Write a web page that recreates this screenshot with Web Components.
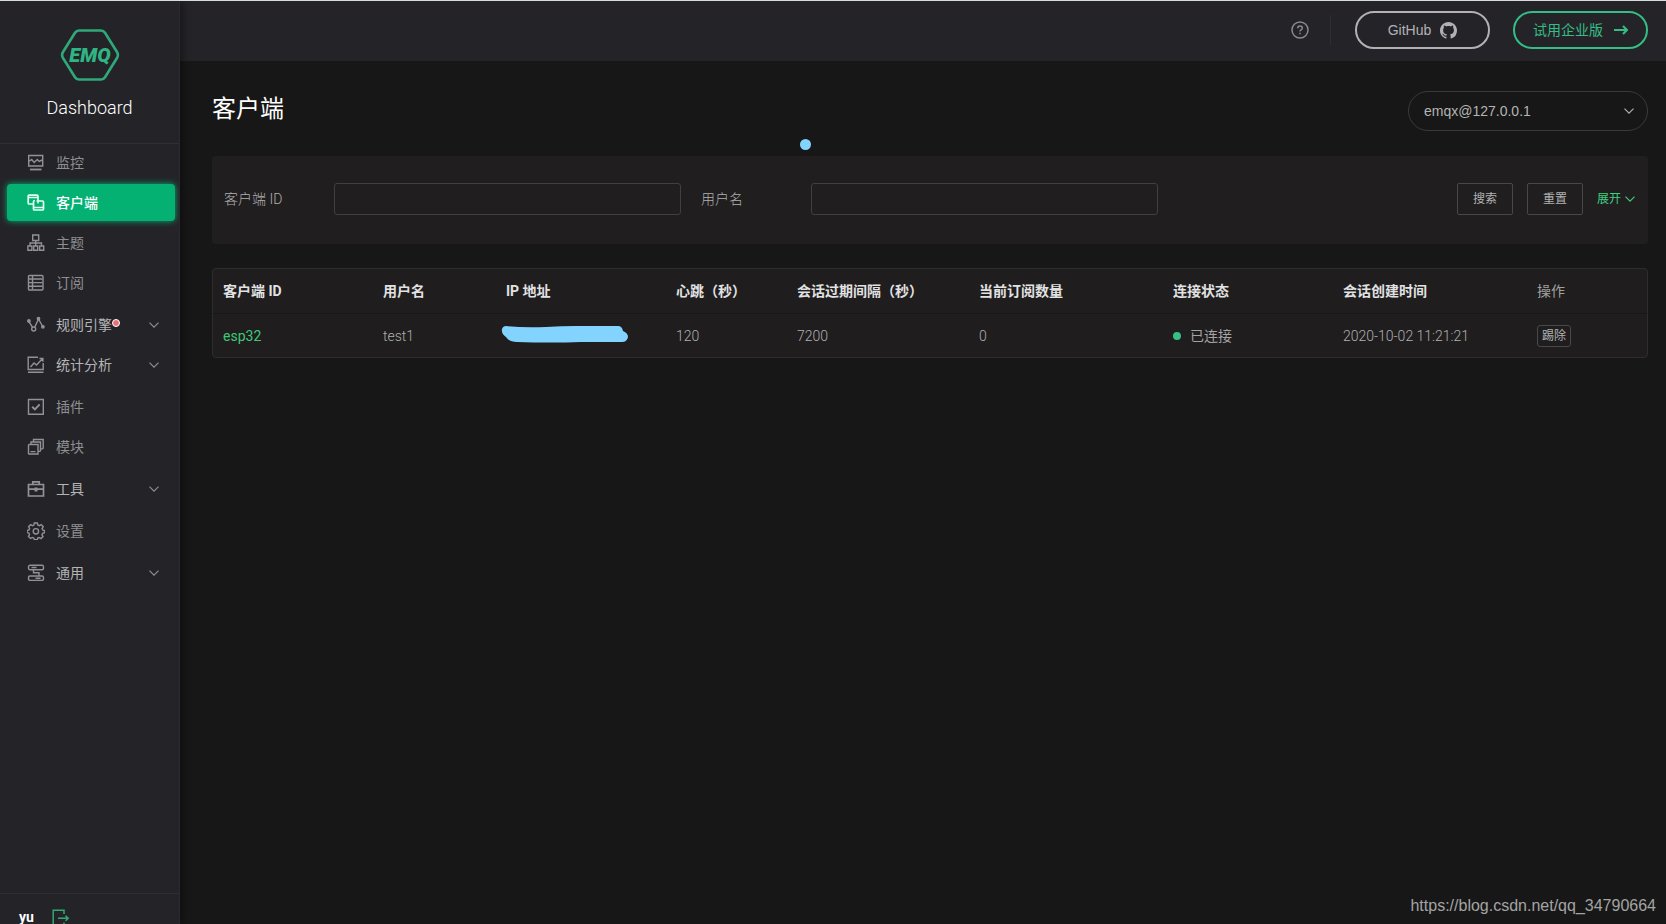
<!DOCTYPE html>
<html lang="zh-CN">
<head>
<meta charset="utf-8">
<meta name="viewport" content="width=device-width, initial-scale=1">
<title>EMQ Dashboard</title>
<style>
  body {
    margin: 0;
    background: #171717;
    color: #a3a3a3;
    font: 14px/20px Roboto, "Noto Sans CJK SC", sans-serif;
  }
</style>
</head>
<body>
<emq-app></emq-app>
<script>
function define(name, html, setup) {
  const template = document.createElement('template');
  template.innerHTML = html;
  customElements.define(name, class extends HTMLElement {
    connectedCallback() {
      if (this.shadowRoot) return;
      this.attachShadow({ mode: 'open' }).append(template.content.cloneNode(true));
      if (setup) setup(this, this.shadowRoot);
    }
  });
}

const ICONS = {
  monitor: '<path d="M1.700 1.500h14v10.500h-14zM1.700 7.500l3-2 2.500 3 3-3 2 2 3-1.500"/><path d="M3 15.500h11.500" stroke-width="1.800"/>',
  clients: '<path d="M7 10H2.200Q1.200 10 1.200 9V2.200Q1.200 1.200 2.200 1.200H10Q11 1.200 11 2.200V6M1.200 3.500H11" stroke-width="1.700"/><path d="M9.500 7H15.500Q16.500 7 16.500 8V15Q16.500 16 15.500 16H7.500Q6.500 16 6.500 15V7.500Q6.500 6.500 8 6.500M6.500 13.500h10" stroke-width="1.700"/><path d="M11 6V9.500"/>',
  topics: '<path d="M5.700 1h6v5.500h-6zM8.700 6.500V9M3 12V9h11.500v3M8.700 9v3M.900 12h4v4.200h-4zM6.700 12h4v4.200h-4zM12.700 12h4v4.200h-4z"/>',
  subs: '<rect x="1.500" y="1.500" width="14.500" height="14.500" rx="1"/><path d="M1.500 5h14M1.500 8.600h14M1.500 12.200h14M5.500 1.500v14"/>',
  rules: '<path d="M1.800 5.500L5.600 11.300M7.700 11.300L11.500 3L15.700 10.500"/><circle cx="1.900" cy="5" r="1.200" fill="currentColor"/><circle cx="6.700" cy="13" r="2"/><circle cx="11.500" cy="2.600" r="1.200" fill="currentColor"/><circle cx="15.900" cy="10.800" r="1.200" fill="currentColor"/>',
  stats: '<path d="M11 1.200H1.200V13.500H16.200V7M1 16.300h15.500M3.500 11l3.500-4 2.500 2L15.200 3M12.500 2.500h3.400v3.300"/>',
  plugins: '<path d="M1.500 1.500h14.800v14.800h-14.800z"/><path d="M5.200 8.700l2.700 2.700 4.800-5" stroke-width="2"/>',
  modules: '<path d="M2.200 6.500H11V16H2.200Q1.500 16 1.500 15V7.500Q1.500 6.500 2.200 6.500M4 6.500V4h9.500V12.500Q13.500 13.500 11 13.500M6.500 4V1.500H16.200V10Q16.200 11 13.500 11M3.500 13.600h5"/>',
  tools: '<path d="M1.500 4.500h15v11.500h-15zM5.800 4.500V1.800h6.400V4.500M1.500 9.200h15" stroke-width="1.700"/><path d="M9 7.500v4" stroke-width="3"/>',
  settings: '<path d="M7.300 1h3l.500 2 1.500.700 1.900-1.100 2 2.100-1.100 1.900.600 1.400 1.800.500v2.200l-1.900.600-.600 1.400 1 1.900-2 2-1.800-1.100-1.500.600-.500 1.700h-2.800l-.600-1.800-1.500-.600-1.800 1-2-2 1-1.800-.600-1.500-1.800-.500V8.500l1.900-.500.600-1.500-1-1.800 2-2.100 1.800 1.100 1.500-.600z"/><circle cx="8.900" cy="9.300" r="2.700"/>',
  general: '<rect x="1.500" y="1.300" width="15" height="4.400" rx="1.500"/><rect x="1.500" y="12" width="15" height="4.400" rx="1.500"/><path d="M6.500 5.700V8.800H12V12M4.500 3.500h5M8.500 14.200h5"/>'
};

/* Line icon picked by name */
define('emq-icon', `
  <style>
    :host { display: block; width: 18px; height: 18px; flex: none; }
    svg { display: block; width: 100%; height: 100%; fill: none; stroke: currentColor; stroke-width: 1.4; }
  </style>
  <svg viewBox="0 0 18 18" aria-hidden="true"></svg>`,
  (host, root) => { root.querySelector('svg').innerHTML = ICONS[host.getAttribute('name')] || ''; });

define('emq-chevron', `
  <style>
    :host { display: block; flex: none; width: 10px; height: 6px; }
    svg { display: block; fill: none; stroke: currentColor; stroke-width: 1.1; }
  </style>
  <svg width="10" height="6" viewBox="0 0 10 6" aria-hidden="true"><path d="M.5 .7L5 5.200L9.500 .7"/></svg>`);

define('emq-nav-item', `
  <style>
    :host { display: block; color: #8f8f92; }
    :host([group]) { color: #b4b4b6; }
    a {
      display: flex; align-items: center; height: 37px; margin: 0 4px 3px 7px; padding: 0 16px 0 20px;
      border-radius: 4px; color: inherit; text-decoration: none;
    }
    emq-icon { margin-right: 11px; color: #929294; }
    emq-chevron { display: none; margin-left: auto; color: #929294; }
    :host([group]) emq-chevron { display: block; }
    :host([active]) a { background: #04b173; color: #fff; font-weight: 500; box-shadow: 0 0 6px #04b173; }
    :host([active]) emq-icon { color: #e4fff4; }
    .label { position: relative; }
    .badge { display: none; }
    :host([badge]) .badge {
      display: block; position: absolute; top: 4px; right: -8px; width: 6px; height: 6px;
      border: 1px solid #fff; border-radius: 50%; background: #e8707a;
    }
  </style>
  <a href="#"><emq-icon></emq-icon><span class="label"><slot></slot><i class="badge"></i></span><emq-chevron></emq-chevron></a>`,
  (host, root) => {
    const icon = document.createElement('emq-icon');
    icon.setAttribute('name', host.getAttribute('icon'));
    root.querySelector('emq-icon').replaceWith(icon);
    if (host.hasAttribute('active')) root.querySelector('a').setAttribute('aria-current', 'page');
  });

define('emq-sidebar', `
  <style>
    :host {
      display: flex; flex-direction: column; box-sizing: border-box; height: 100%; overflow: hidden;
      background: #242428; border-right: 1px solid #2b2b2e;
    }
    .brand {
      display: flex; flex-direction: column; align-items: center; box-sizing: border-box; flex: none;
      height: 143px; padding-top: 27px; border-bottom: 1px solid #303034; color: #fff;
    }
    .brand svg { display: block; }
    .brand text { font: italic 900 20px Roboto, sans-serif; fill: #2fb583; }
    .brand span { margin-top: 14px; font-size: 18px; line-height: 24px; font-weight: 300; }
    nav { display: flex; flex-direction: column; gap: 2px; flex: 1; min-height: 0; }
    footer {
      display: flex; align-items: flex-start; gap: 18px; box-sizing: border-box; flex: none; height: 31px;
      padding: 15px 19px 0; border-top: 1px solid #2f2f32; color: #fff; font-weight: 700;
    }
    footer span { line-height: 16px; }
    footer a { color: #33a873; }
    footer svg { display: block; fill: none; stroke: currentColor; stroke-width: 1.5; }
  </style>
  <div class="brand">
    <svg width="60" height="54" viewBox="0 0 60 54" role="img" aria-label="EMQ">
      <path d="M19 2.500H41Q43.500 2.500 45 4.800L57 24Q58.800 27 57 30L45 49.200Q43.500 51.500 41 51.500H19Q16.500 51.500 15 49.200L3 30Q1.200 27 3 24L15 4.800Q16.500 2.500 19 2.500Z" fill="none" stroke="#2fa87a" stroke-width="2.600"/>
      <text x="30" y="34" text-anchor="middle">EMQ</text>
    </svg>
    <span>Dashboard</span>
  </div>
  <nav>
    <div>
      <emq-nav-item icon="monitor">监控</emq-nav-item>
      <emq-nav-item icon="clients" active>客户端</emq-nav-item>
      <emq-nav-item icon="topics">主题</emq-nav-item>
      <emq-nav-item icon="subs">订阅</emq-nav-item>
    </div>
    <div>
      <emq-nav-item icon="rules" group badge>规则引擎</emq-nav-item>
      <emq-nav-item icon="stats" group>统计分析</emq-nav-item>
    </div>
    <div>
      <emq-nav-item icon="plugins">插件</emq-nav-item>
      <emq-nav-item icon="modules">模块</emq-nav-item>
    </div>
    <emq-nav-item icon="tools" group>工具</emq-nav-item>
    <emq-nav-item icon="settings">设置</emq-nav-item>
    <emq-nav-item icon="general" group>通用</emq-nav-item>
  </nav>
  <footer>
    <span>yu</span>
    <a href="#" aria-label="退出"><svg width="18" height="19" viewBox="0 0 18 19"><path d="M12 5V1.200H1.200V17.500H12V13.500M6 9.300H16M13.500 6.800L16.200 9.300L13.500 11.800"/></svg></a>
  </footer>`);

define('emq-topbar', `
  <style>
    :host {
      display: flex; align-items: center; justify-content: flex-end; box-sizing: border-box; height: 60px;
      padding: 0 18px 2px; background: #242428; font-family: "Liberation Sans", "Noto Sans CJK SC", sans-serif;
    }
    .help { display: block; color: #8a8a8d; }
    .help svg { display: block; fill: none; stroke: currentColor; stroke-width: 1.5; }
    .rule { width: 1px; height: 30px; margin: 0 24px 0 21px; background: #303033; }
    .pill {
      display: flex; align-items: center; justify-content: center; gap: 9px; box-sizing: border-box;
      width: 135px; height: 38px; border: 2px solid #b2b2b5; border-radius: 19px; color: #b2b2b5; text-decoration: none;
    }
    .pill svg { display: block; }
    .trial { gap: 11px; margin-left: 23px; border-color: #34bd86; color: #34bd86; }
  </style>
  <a class="help" href="#" aria-label="帮助"><svg width="18" height="18" viewBox="0 0 18 18"><circle cx="9" cy="9" r="8"/><path d="M6.700 7.300Q6.700 5 9 5Q11.300 5 11.300 7Q11.300 8.200 10 8.900Q9 9.400 9 10.500M9 11.800V13.300"/></svg></a>
  <i class="rule"></i>
  <a class="pill" href="#">GitHub
    <svg width="17" height="17" viewBox="0 0 16 16" fill="currentColor"><path d="M8 0C3.580 0 0 3.580 0 8c0 3.540 2.290 6.530 5.470 7.590.4.070.55-.17.55-.38 0-.19-.01-.82-.01-1.490-2.010.37-2.530-.49-2.690-.94-.09-.23-.48-.94-.82-1.130-.28-.15-.68-.52-.01-.53.63-.01 1.080.58 1.230.82.72 1.210 1.870.87 2.330.66.07-.52.28-.87.51-1.070-1.780-.2-3.640-.89-3.640-3.950 0-.87.31-1.590.82-2.150-.08-.2-.36-1.020.08-2.120 0 0 .67-.21 2.200.82.64-.18 1.320-.27 2-.27s1.360.09 2 .27c1.530-1.040 2.200-.82 2.200-.82.44 1.100.16 1.920.08 2.120.51.56.82 1.270.82 2.150 0 3.070-1.870 3.750-3.650 3.950.29.25.54.73.54 1.480 0 1.070-.01 1.930-.01 2.200 0 .21.15.46.55.38A8.010 8.010 0 0 0 16 8c0-4.420-3.580-8-8-8z"/></svg></a>
  <a class="pill trial" href="#">试用企业版
    <svg width="14" height="12" viewBox="0 0 14 12" fill="none" stroke="currentColor" stroke-width="2"><path d="M0 6H12.500M9 2L13 6L9 10"/></svg></a>`);

define('emq-node-select', `
  <style>
    :host { display: grid; align-items: center; width: 240px; height: 40px; }
    select, emq-chevron { grid-area: 1 / 1; }
    select {
      appearance: none; box-sizing: border-box; width: 100%; height: 40px; padding: 0 40px 0 15px;
      border: 1px solid #3a3a3a; border-radius: 20px; background: #171717; color: #b4b4b4;
      font: 14px "Liberation Sans", sans-serif;
    }
    emq-chevron { justify-self: end; margin-right: 14px; color: #b4b4b4; pointer-events: none; }
  </style>
  <select aria-label="节点"><option>emqx@127.0.0.1</option></select>
  <emq-chevron></emq-chevron>`);

define('emq-field', `
  <style>
    :host { display: grid; grid-template-columns: 110px 1fr; align-items: center; }
    label { font-weight: 300; color: #b0b0b0; }
    input {
      box-sizing: border-box; width: 100%; height: 32px; padding: 0 12px; border: 1px solid #404040;
      border-radius: 3px; background: #201e1f; color: #c0c0c0; font: inherit;
    }
  </style>
  <label for="field"><slot></slot></label><input id="field" type="text">`);

define('emq-filter', `
  <style>
    :host { display: block; }
    form {
      display: grid; grid-template-columns: repeat(3, minmax(0, 1fr)); align-items: center; gap: 20px;
      box-sizing: border-box; height: 88px; padding: 0 13px 2px 12px; border-radius: 4px; background: #201e1f;
    }
    .actions { display: flex; align-items: center; justify-content: flex-end; gap: 14px; font-size: 12px; }
    button {
      width: 56px; height: 32px; padding: 0; border: 1px solid #484848; border-radius: 2px;
      background: none; color: #b2b2b2; font: inherit;
    }
    a { display: flex; align-items: center; gap: 4px; color: #3fd07f; text-decoration: none; }
  </style>
  <form>
    <emq-field>客户端 ID</emq-field>
    <emq-field>用户名</emq-field>
    <div class="actions">
      <button type="button">搜索</button>
      <button type="reset">重置</button>
      <a href="#">展开<emq-chevron></emq-chevron></a>
    </div>
  </form>`);

define('emq-client-table', `
  <style>
    :host { display: block; border: 1px solid #2d2d2d; border-radius: 4px; background: #1f1d1e; }
    table { width: 100%; border-collapse: collapse; table-layout: fixed; }
    th, td { padding: 0 0 0 10px; box-sizing: border-box; text-align: left; white-space: nowrap; }
    th { height: 44px; border-bottom: 1px solid #171717; color: #e2e2e2; font-weight: 700; }
    th.plain { color: #a0a0a0; font-weight: 400; }
    td { height: 44px; padding-top: 1px; font-weight: 300; color: #b0b0b0; }
    td a { color: #3fc878; text-decoration: none; font-weight: 400; }
    .masked { position: relative; }
    .masked svg { position: absolute; left: 5px; top: 11px; }
    .status { display: flex; align-items: center; gap: 9px; font-weight: 400; color: #a3a3a3; }
    .status::before { content: ""; width: 8px; height: 8px; border-radius: 50%; background: #38bf88; }
    button {
      display: block; height: 22px; padding: 0 4px; border: 1px solid #484848; border-radius: 3px;
      background: none; color: #b2b2b2; font: inherit; font-size: 12px; line-height: 20px; font-weight: 400;
    }
  </style>
  <table>
    <colgroup>
      <col style="width:160px"><col style="width:123px"><col style="width:170px"><col style="width:121px"><col style="width:182px"><col style="width:194px"><col style="width:170px"><col style="width:194px"><col style="width:120px">
    </colgroup>
    <thead>
      <tr><th>客户端 ID</th><th>用户名</th><th>IP 地址</th><th>心跳（秒）</th><th>会话过期间隔（秒）</th><th>当前订阅数量</th><th>连接状态</th><th>会话创建时间</th><th class="plain">操作</th></tr>
    </thead>
    <tbody>
      <tr>
        <td><a href="#">esp32</a></td><td>test1</td>
        <td class="masked"><svg width="128" height="19" viewBox="0 0 128 19" aria-hidden="true"><path d="M5 1Q22 3 45 2Q60 1 75 1H117Q121 1 122 6Q127 8 127 12Q126 17 121 17Q100 17 80 17Q50 18 16 17Q8 17 5 12Q0 9 1 4Q2 1 5 1Z" fill="#82d4ff"/></svg></td>
        <td>120</td><td>7200</td><td>0</td>
        <td><span class="status">已连接</span></td><td>2020-10-02 11:21:21</td>
        <td><button type="button">踢除</button></td>
      </tr>
    </tbody>
  </table>`);

define('emq-app', `
  <style>
    :host {
      display: grid; grid-template-columns: 180px minmax(0, 1fr); box-sizing: border-box; height: 100vh;
      border-top: 1px solid #d5dcdc; position: relative; overflow: hidden;
    }
    emq-sidebar { position: relative; z-index: 1; box-shadow: 2px 0 8px rgba(0, 0, 0, .45); min-height: 0; }
    main { padding: 30px 18px 0 32px; }
    .head { display: flex; justify-content: space-between; align-items: flex-start; margin-bottom: 25px; }
    h1 { margin: 0; color: #fff; font-size: 24px; line-height: 36px; font-weight: 400; }
    emq-client-table { margin-top: 24px; }
    .dot { position: absolute; left: 800px; top: 138px; width: 11px; height: 11px; border-radius: 50%; background: #82d4ff; }
    .source { position: absolute; right: 10px; bottom: 8px; color: #a4a4a4; font: 16px/20px "Liberation Sans", sans-serif; }
  </style>
  <emq-sidebar></emq-sidebar>
  <div>
    <emq-topbar></emq-topbar>
    <main>
      <div class="head"><h1>客户端</h1><emq-node-select></emq-node-select></div>
      <emq-filter></emq-filter>
      <emq-client-table></emq-client-table>
    </main>
  </div>
  <i class="dot"></i>
  <span class="source">https://blog.csdn.net/qq_34790664</span>`);
</script>
</body>
</html>
